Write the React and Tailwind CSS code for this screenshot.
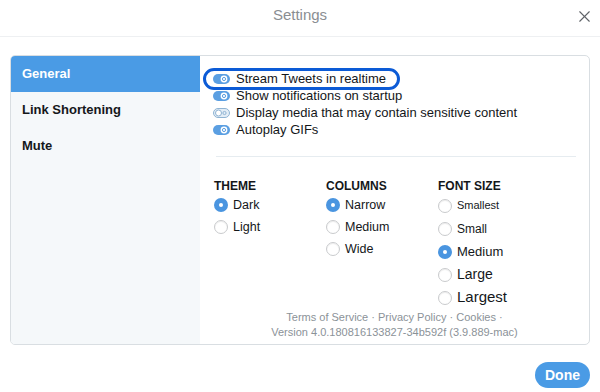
import React from 'react';
import { X } from 'lucide-react';

const toggles = [
  { label: 'Stream Tweets in realtime', on: true, ring: true },
  { label: 'Show notifications on startup', on: true },
  { label: 'Display media that may contain sensitive content', on: false },
  { label: 'Autoplay GIFs', on: true },
];

const Toggle = ({ on }) =>
  on ? (
    <svg width="17" height="10" viewBox="0 0 17 10">
      <rect x="0" y="0" width="17" height="10" rx="5" fill="#5b9fe2" />
      <circle cx="11" cy="5" r="3.4" fill="#ffffff" />
      <circle cx="11" cy="5" r="1.6" fill="none" stroke="#5b9fe2" strokeWidth="1" />
    </svg>
  ) : (
    <svg width="17" height="10" viewBox="0 0 17 10">
      <rect x="0.5" y="0.5" width="16" height="9" rx="4.5" fill="#e3edf6" stroke="#8fb3d3" />
      <circle cx="5.5" cy="5" r="3" fill="#ffffff" stroke="#8fb3d3" strokeWidth="1" />
      <circle cx="11.5" cy="5" r="1.6" fill="none" stroke="#8fb3d3" strokeWidth="1" />
    </svg>
  );

const Radio = ({ checked }) =>
  checked ? (
    <span className="w-[14px] h-[14px] rounded-full bg-[#4a95e0] flex items-center justify-center shrink-0">
      <span className="w-[4px] h-[4px] rounded-full bg-white" />
    </span>
  ) : (
    <span className="w-[14px] h-[14px] rounded-full bg-white border border-[#c9cbcd] shadow-[inset_0_1px_1px_rgba(0,0,0,0.08)] shrink-0" />
  );

const Column = ({ title, items, rowClass }) => (
  <div className="flex flex-col">
    <div className="h-[14px] leading-[14px] text-[12px] font-bold text-[#14171a]">{title}</div>
    <div className="flex flex-col mt-[1px]">
      {items.map((it) => (
        <div key={it.label} className={`flex items-center gap-[5px] ${rowClass}`}>
          <Radio checked={it.checked} />
          <span className={`${it.size || 'text-[12.5px]'} text-[#14171a]`}>{it.label}</span>
        </div>
      ))}
    </div>
  </div>
);

export default function App() {
  return (
    <div className="w-[600px] h-[392px] bg-white flex flex-col font-['Liberation_Sans',Arial,sans-serif]">
      {/* Header */}
      <div className="h-[37px] grid grid-cols-[1fr_auto_1fr] items-start pt-[6px] border-b border-[#eef0f2]">
        <div />
        <div className="text-[15px] leading-[18px] text-[#8a8e92]">Settings</div>
        <div className="flex justify-end pr-[6px] pt-[1px]">
          <X size={19} strokeWidth={1.4} color="#5f6368" />
        </div>
      </div>

      {/* Panel */}
      <div className="mt-[18px] mx-[10px] h-[290px] border border-[#d9dee2] rounded-[5px] flex overflow-hidden">
        <div className="w-[189px] bg-[#f5f8fa] flex flex-col">
          <div className="h-[36px] px-[11px] flex items-center bg-[#4a9be5] text-white font-bold text-[13px]">
            General
          </div>
          <div className="h-[36px] px-[11px] flex items-center text-[#14171a] font-bold text-[13px]">
            Link Shortening
          </div>
          <div className="h-[36px] px-[11px] flex items-center text-[#14171a] font-bold text-[13px]">
            Mute
          </div>
        </div>

        <div className="flex-1 flex flex-col pt-[14px] px-[13px]">
          <div className="flex flex-col">
            {toggles.map((t) => (
              <div key={t.label} className="relative h-[17px] flex items-center gap-[6px]">
                {t.ring && (
                  <span className="absolute left-[-10px] top-[-2px] w-[197px] h-[22px] rounded-full border-[3px] border-[#0c5bd6]" />
                )}
                <Toggle on={t.on} />
                <span className="text-[13px] text-[#14171a]">{t.label}</span>
              </div>
            ))}
          </div>

          <div className="mt-[18px] ml-[3px] h-px bg-[#e6ecf0]" />

          <div className="mt-[22px] pl-[1px] grid grid-cols-[112px_112px_1fr]">
            <Column
              title="THEME"
              rowClass="h-[22px]"
              items={[
                { label: 'Dark', checked: true },
                { label: 'Light' },
              ]}
            />
            <Column
              title="COLUMNS"
              rowClass="h-[22px]"
              items={[
                { label: 'Narrow', checked: true },
                { label: 'Medium' },
                { label: 'Wide' },
              ]}
            />
            <Column
              title="FONT SIZE"
              rowClass="h-[23px]"
              items={[
                { label: 'Smallest', size: 'text-[11px]' },
                { label: 'Small', size: 'text-[12px]' },
                { label: 'Medium', size: 'text-[13px]', checked: true },
                { label: 'Large', size: 'text-[14px]' },
                { label: 'Largest', size: 'text-[15px]' },
              ]}
            />
          </div>

          <div className="mt-auto pb-[4px] flex flex-col items-center text-[11px] leading-[15px] text-[#8b9298]">
            <div>Terms of Service · Privacy Policy · Cookies ·</div>
            <div>Version 4.0.180816133827-34b592f (3.9.889-mac)</div>
          </div>
        </div>
      </div>

      {/* Footer */}
      <div className="flex justify-end pr-[10px] mt-[17px]">
        <button className="w-[55px] h-[26px] rounded-full bg-[#4a9be5] text-white font-bold text-[14px]">
          Done
        </button>
      </div>
    </div>
  );
}
